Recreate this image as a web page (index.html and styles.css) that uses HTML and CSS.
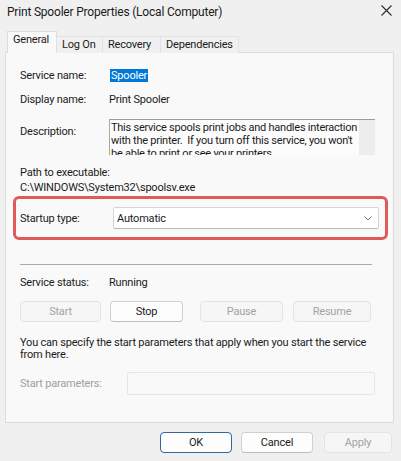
FILE: index.html
```html
<!DOCTYPE html>
<html>
<head>
<meta charset="utf-8">
<title>Print Spooler Properties</title>
<link rel="stylesheet" href="styles.css">
</head>
<body>
<div class="window">
  <div class="titlebar">
    <span class="title">Print Spooler Properties (Local Computer)</span>
    <svg class="close" width="11" height="11" viewBox="0 0 11 11"><path d="M0.5 0.5L10.5 10.5M10.5 0.5L0.5 10.5" stroke="#2b2b2b" stroke-width="1.1" fill="none"/></svg>
  </div>
  <div class="tabs">
    <div class="tab active">General</div>
    <div class="tab">Log On</div>
    <div class="tab">Recovery</div>
    <div class="tab">Dependencies</div>
  </div>
  <div class="panel">
    <div class="row r-name">
      <span class="label">Service name:</span>
      <span class="value"><span class="sel">Spooler</span></span>
    </div>
    <div class="row r-display">
      <span class="label">Display name:</span>
      <span class="value">Print Spooler</span>
    </div>
    <div class="row r-desc">
      <span class="label desc-label">Description:</span>
      <div class="textarea">
        <div class="ta-text">This service spools print jobs and handles interaction<br>with the printer.&nbsp; If you turn off this service, you won't<br>be able to print or see your printers.</div>
        <div class="ta-scroll"></div>
      </div>
    </div>
    <div class="path-label">Path to executable:</div>
    <div class="path-value">C:\WINDOWS\System32\spoolsv.exe</div>
    <div class="highlight">
      <span class="label">Startup type:</span>
      <div class="select">
        <span>Automatic</span>
        <svg class="chev" width="8" height="5" viewBox="0 0 8 5"><path d="M0.5 0.5L4 4L7.5 0.5" stroke="#7a7a7a" stroke-width="1" fill="none"/></svg>
      </div>
    </div>
    <div class="sep"></div>
    <div class="row r-status">
      <span class="label">Service status:</span>
      <span class="value">Running</span>
    </div>
    <div class="svc-buttons">
      <div class="btn dis b-start">Start</div>
      <div class="btn b-stop">Stop</div>
      <div class="btn dis b-pause">Pause</div>
      <div class="btn dis b-resume">Resume</div>
    </div>
    <div class="note">You can specify the start parameters that apply when you start the service<br>from here.</div>
    <div class="params">
      <span class="label dim">Start parameters:</span>
      <div class="param-input"></div>
    </div>
  </div>
  <div class="footer">
    <div class="btn fbtn ok">OK</div>
    <div class="btn fbtn cancel">Cancel</div>
    <div class="btn fbtn dis apply">Apply</div>
  </div>
</div>
</body>
</html>
```
FILE: styles.css
```css
html, body {
  margin: 0;
  padding: 0;
}
body {
  background: #f0f0f0;
  font-family: Roboto, "Liberation Sans", sans-serif;
  font-size: 11px;
  letter-spacing: -0.2px;
  color: #1b1b1b;
}
.window {
  width: 401px;
  height: 461px;
  overflow: hidden;
}
.titlebar {
  height: 33px;
  display: flex;
  align-items: flex-start;
  justify-content: space-between;
}
.title {
  margin: 5px 0 0 7px;
  font-size: 12px;
  line-height: 15px;
}
.close {
  margin: 5px 9px 0 0;
}
.tabs {
  display: flex;
  align-items: flex-end;
  height: 20px;
  padding-left: 7px;
  position: relative;
  z-index: 2;
  margin-bottom: -1px;
}
.tab {
  height: 16px;
  line-height: 16px;
  padding: 0 5px;
  background: #f0f0f0;
  border: 1px solid #e2e2e2;
  border-bottom: none;
  margin-left: -1px;
  color: #1b1b1b;
  font-size: 11px;
}
.tab:nth-child(1) { width: 38px; }
.tab:nth-child(2) { width: 35px; }
.tab:nth-child(3) { width: 47px; }
.tab:nth-child(4) { width: 67px; }
.tab.active {
  margin-left: 0;
  height: 20px;
  line-height: 16px;
  background: #f9f9f9;
  border-color: #dcdcdc;
  padding-bottom: 1px;
}
.panel {
  box-sizing: border-box;
  margin-left: 5px;
  width: 389px;
  height: 371px;
  background: #f9f9f9;
  border: 1px solid #dcdcdc;
  padding: 16px 0 0 0;
}
.row {
  display: flex;
  align-items: flex-start;
  line-height: 14px;
  padding-left: 14px;
}
.label {
  width: 89px;
  flex: none;
}
.value {
  flex: none;
}
.sel {
  background: #0078d7;
  color: #fff;
  padding: 0 1px;
  margin-left: 1px;
}
.r-display {
  margin-top: 10px;
}
.r-desc {
  margin-top: 12px;
}
.desc-label {
  padding-top: 6px;
}
.textarea {
  box-sizing: border-box;
  width: 266px;
  height: 36px;
  background: #fcfcfc;
  border-top: 1px solid #9c9c9c;
  border-left: 1px solid #a8a8a8;
  display: flex;
  overflow: hidden;
}
.ta-text {
  flex: 1;
  padding: 1px 0 0 1px;
  line-height: 13px;
  letter-spacing: -0.25px;
  white-space: nowrap;
  overflow: hidden;
}
.ta-scroll {
  width: 16px;
  flex: none;
  background: #ededed;
}
.path-label {
  margin-top: 10px;
  padding-left: 14px;
  line-height: 15px;
}
.path-value {
  padding-left: 14px;
  line-height: 15px;
}
.highlight {
  box-sizing: border-box;
  margin: 1px 0 0 7px;
  width: 375px;
  height: 44px;
  border: 3px solid #e05a5a;
  border-radius: 6px;
  display: flex;
  align-items: center;
  padding-left: 4px;
}
.highlight .label {
  width: 93px;
}
.select {
  box-sizing: border-box;
  width: 266px;
  height: 22px;
  background: #ffffff;
  border: 1px solid #d4d4d4;
  border-bottom-color: #b8b8b8;
  border-radius: 2px;
  display: flex;
  align-items: center;
  justify-content: space-between;
  padding: 0 6px 0 3px;
  font-size: 11px;
}
.sep {
  margin: 24px 0 0 14px;
  width: 352px;
  height: 1px;
  background: #a9a9a9;
}
.r-status {
  margin-top: 11px;
}
.svc-buttons {
  display: flex;
  margin: 11px 0 0 14px;
}
.btn {
  box-sizing: border-box;
  height: 21px;
  line-height: 19px;
  text-align: center;
  background: #fdfdfd;
  border: 1px solid #d0d0d0;
  border-bottom-color: #bdbdbd;
  border-radius: 4px;
  color: #1b1b1b;
  flex: none;
}
.btn.dis {
  background: #f6f6f6;
  border-color: #e4e4e4;
  color: #a3a3a3;
}
.b-start { width: 81px; }
.b-stop { width: 73px; margin-left: 9px; }
.b-pause { width: 83px; margin-left: 17px; }
.b-resume { width: 78px; margin-left: 10px; }
.note {
  margin: 15px 0 0 14px;
  line-height: 12px;
  white-space: nowrap;
}
.params {
  display: flex;
  align-items: center;
  margin: 11px 0 0 14px;
}
.params .label {
  width: 107px;
}
.dim {
  color: #a0a0a0;
}
.param-input {
  box-sizing: border-box;
  width: 248px;
  height: 23px;
  background: #f9f9f9;
  border: 1px solid #e6e6e6;
  border-radius: 2px;
}
.footer {
  display: flex;
  justify-content: flex-end;
  padding: 9px 9px 0 0;
}
.fbtn {
  width: 72px;
  margin-left: 9px;
}
.fbtn.apply {
  width: 68px;
  margin-left: 11px;
}
.ok {
  border: 1px solid #33689a;
}
```
